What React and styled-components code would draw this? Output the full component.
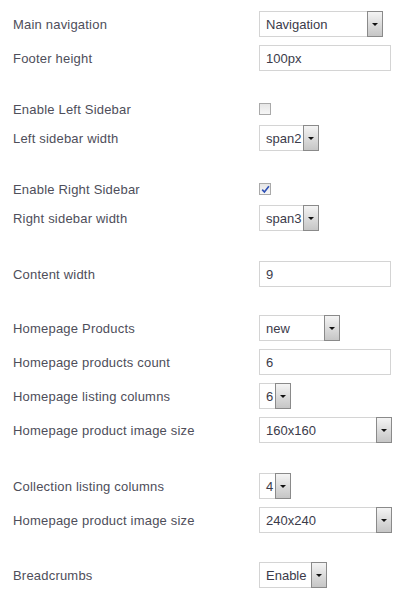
import React from "react";
import styled, { createGlobalStyle } from "styled-components";

const Global = createGlobalStyle`
  html, body { margin: 0; padding: 0; background: #fff; }
  body { font-family: "Liberation Sans", Arial, sans-serif; }
`;

const Page = styled.div`
  display: flex;
  flex-direction: column;
  gap: 30px;
  padding: 11px 0 0 13px;
  width: 419px;
  box-sizing: border-box;
`;

const Section = styled.div`
  display: flex;
  flex-direction: column;
  gap: 8px;
  margin-top: ${(p) => p.$shift || 0}px;
`;

const Row = styled.div`
  display: grid;
  grid-template-columns: 246px auto;
  align-items: center;
  height: ${(p) => (p.$compact ? 16 : 26)}px;
`;

const Label = styled.span`
  font-size: 13px;
  color: #4e4e5a;
  letter-spacing: 0.2px;
  white-space: nowrap;
`;

const TextInput = styled.div`
  width: 132px;
  height: 26px;
  box-sizing: border-box;
  border: 1px solid #d4d4d4;
  background: #fff;
  display: flex;
  align-items: center;
  padding-left: 6px;
  font-size: 13px;
  color: #3b3b4a;
`;

const SelectBox = styled.div`
  width: ${(p) => p.$w}px;
  height: 26px;
  box-sizing: border-box;
  border: 1px solid #d4d4d4;
  border-right: none;
  background: #fff;
  display: flex;
  align-items: center;
  font-size: 13px;
  color: #3b3b4a;
`;

const SelectValue = styled.span`
  flex: 1;
  padding-left: 6px;
  white-space: nowrap;
  overflow: hidden;
`;

const ArrowButton = styled.span`
  width: 16px;
  height: 26px;
  box-sizing: border-box;
  margin-top: -1px;
  margin-bottom: -1px;
  border: 1px solid #8a8a8a;
  background: linear-gradient(#f4f4f4, #dadada 55%, #c6c6c6);
  display: flex;
  align-items: center;
  justify-content: center;
`;

const Triangle = styled.span`
  width: 0;
  height: 0;
  border-left: 3px solid transparent;
  border-right: 3px solid transparent;
  border-top: 3px solid #111;
  margin-top: 1px;
`;

const Check = styled.span`
  width: 12px;
  height: 12px;
  box-sizing: border-box;
  border: 1px solid #a9a9a9;
  background: linear-gradient(#e6e6e6, #f6f6f6);
  display: flex;
  align-items: center;
  justify-content: center;
`;

const Select = ({ w, value }) => (
  <SelectBox $w={w}>
    <SelectValue>{value}</SelectValue>
    <ArrowButton>
      <Triangle />
    </ArrowButton>
  </SelectBox>
);

const Checkbox = ({ checked }) => (
  <Check>
    {checked && (
      <svg width="9" height="9" viewBox="0 0 9 9">
        <path d="M1.2 4.6 L3.4 7 L7.9 1.2" fill="none" stroke="#2d4fb5" strokeWidth="1.6" />
      </svg>
    )}
  </Check>
);

export default function App() {
  return (
    <>
      <Global />
      <Page>
        <Section>
          <Row>
            <Label>Main navigation</Label>
            <Select w={124} value="Navigation" />
          </Row>
          <Row>
            <Label>Footer height</Label>
            <TextInput>100px</TextInput>
          </Row>
        </Section>
        <Section>
          <Row $compact>
            <Label>Enable Left Sidebar</Label>
            <Checkbox />
          </Row>
          <Row>
            <Label>Left sidebar width</Label>
            <Select w={60} value="span2" />
          </Row>
        </Section>
        <Section>
          <Row $compact>
            <Label>Enable Right Sidebar</Label>
            <Checkbox checked />
          </Row>
          <Row>
            <Label>Right sidebar width</Label>
            <Select w={60} value="span3" />
          </Row>
        </Section>
        <Section>
          <Row>
            <Label>Content width</Label>
            <TextInput>9</TextInput>
          </Row>
        </Section>
        <Section $shift={-2}>
          <Row>
            <Label>Homepage Products</Label>
            <Select w={81} value="new" />
          </Row>
          <Row>
            <Label>Homepage products count</Label>
            <TextInput>6</TextInput>
          </Row>
          <Row>
            <Label>Homepage listing columns</Label>
            <Select w={32} value="6" />
          </Row>
          <Row>
            <Label>Homepage product image size</Label>
            <Select w={133} value="160x160" />
          </Row>
        </Section>
        <Section>
          <Row>
            <Label>Collection listing columns</Label>
            <Select w={32} value="4" />
          </Row>
          <Row>
            <Label>Homepage product image size</Label>
            <Select w={133} value="240x240" />
          </Row>
        </Section>
        <Section $shift={-1}>
          <Row>
            <Label>Breadcrumbs</Label>
            <Select w={68} value="Enable" />
          </Row>
        </Section>
      </Page>
    </>
  );
}
